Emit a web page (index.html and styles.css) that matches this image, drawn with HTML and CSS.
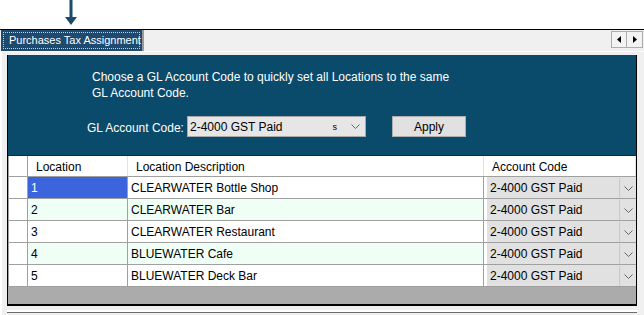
FILE: index.html
```html
<!DOCTYPE html>
<html>
<head>
<meta charset="utf-8">
<link rel="stylesheet" href="styles.css">
</head>
<body>
<div class="top">
  <svg class="arrow" width="12" height="26" viewBox="0 0 12 26">
    <rect x="4.5" y="0" width="3" height="18" fill="#1b4b6b"/>
    <polygon points="0,17 12,17 6,25" fill="#1b4b6b"/>
  </svg>
</div>
<div class="tabbar">
  <div class="tab"><span class="tab-label">Purchases Tax Assignment</span></div>
  <div class="scrollbtns">
    <div class="sbtn"><svg width="4" height="7" viewBox="0 0 4 7"><polygon points="4,0 4,7 0,3.5" fill="#000"/></svg></div>
    <div class="sbtn"><svg width="4" height="7" viewBox="0 0 4 7"><polygon points="0,0 0,7 4,3.5" fill="#000"/></svg></div>
  </div>
</div>
<div class="page">
  <div class="frame">
    <div class="panel">
      <p class="intro">Choose a GL Account Code to quickly set all Locations to the same<br>GL Account Code.</p>
      <div class="controls">
        <span class="label">GL Account Code:</span>
        <div class="combo">
          <span class="combo-text">2-4000 GST Paid</span>
          <span class="combo-clip">s</span>
          <svg class="chev" width="9" height="5" viewBox="0 0 9 5"><polyline points="0.5,0.5 4.5,4.5 8.5,0.5" fill="none" stroke="#666" stroke-width="1"/></svg>
        </div>
        <div class="btn">Apply</div>
      </div>
    </div>
    <div class="grid">
      <div class="row head">
        <div class="c rh"></div>
        <div class="c">Location</div>
        <div class="c">Location Description</div>
        <div class="c">Account Code</div>
      </div>
      <div class="row odd">
        <div class="c rh"></div>
        <div class="c sel">1</div>
        <div class="c">CLEARWATER Bottle Shop</div>
        <div class="c acc"><div class="dd"><span>2-4000 GST Paid</span><div class="ddb"><svg width="9" height="5" viewBox="0 0 9 5"><polyline points="0.5,0.5 4.5,4.5 8.5,0.5" fill="none" stroke="#666" stroke-width="1"/></svg></div></div></div>
      </div>
      <div class="row even">
        <div class="c rh"></div>
        <div class="c">2</div>
        <div class="c">CLEARWATER Bar</div>
        <div class="c acc"><div class="dd"><span>2-4000 GST Paid</span><div class="ddb"><svg width="9" height="5" viewBox="0 0 9 5"><polyline points="0.5,0.5 4.5,4.5 8.5,0.5" fill="none" stroke="#666" stroke-width="1"/></svg></div></div></div>
      </div>
      <div class="row odd">
        <div class="c rh"></div>
        <div class="c">3</div>
        <div class="c">CLEARWATER Restaurant</div>
        <div class="c acc"><div class="dd"><span>2-4000 GST Paid</span><div class="ddb"><svg width="9" height="5" viewBox="0 0 9 5"><polyline points="0.5,0.5 4.5,4.5 8.5,0.5" fill="none" stroke="#666" stroke-width="1"/></svg></div></div></div>
      </div>
      <div class="row even">
        <div class="c rh"></div>
        <div class="c">4</div>
        <div class="c">BLUEWATER Cafe</div>
        <div class="c acc"><div class="dd"><span>2-4000 GST Paid</span><div class="ddb"><svg width="9" height="5" viewBox="0 0 9 5"><polyline points="0.5,0.5 4.5,4.5 8.5,0.5" fill="none" stroke="#666" stroke-width="1"/></svg></div></div></div>
      </div>
      <div class="row odd">
        <div class="c rh"></div>
        <div class="c">5</div>
        <div class="c">BLUEWATER Deck Bar</div>
        <div class="c acc"><div class="dd"><span>2-4000 GST Paid</span><div class="ddb"><svg width="9" height="5" viewBox="0 0 9 5"><polyline points="0.5,0.5 4.5,4.5 8.5,0.5" fill="none" stroke="#666" stroke-width="1"/></svg></div></div></div>
      </div>
      <div class="empty"></div>
    </div>
  </div>
</div>
</body>
</html>
```

FILE: styles.css
```css
* { box-sizing: border-box; }
html, body { margin: 0; padding: 0; }
body {
  width: 644px;
  height: 315px;
  overflow: hidden;
  background: #ffffff;
  font-family: "Liberation Sans", Arial, sans-serif;
  font-size: 12px;
  color: #000;
}
.top {
  height: 29px;
  padding-left: 65px;
}
.arrow { display: block; }

.tabbar {
  border-top: 1px solid #000;
  height: 22px;
  background: #f0f0f0;
  display: flex;
  align-items: flex-start;
}
.tab {
  margin-left: 1px;
  width: 143px;
  height: 21px;
  background: #1d4a6e;
  border-right: 2px solid #9a9a9a;
  padding: 2px 2px 2px 2px;
}
.tab-label {
  display: block;
  height: 17px;
  border: 1px dotted #f3c48f;
  color: #fff;
  font-size: 11px;
  line-height: 15px;
  padding-left: 5px;
  white-space: nowrap;
}
.scrollbtns {
  margin-left: auto;
  margin-right: 1px;
  margin-top: 1px;
  display: flex;
}
.sbtn {
  width: 16px;
  height: 17px;
  border: 1px solid #adadad;
  background: #f3f3f3;
  display: flex;
  align-items: center;
  justify-content: center;
}
.sbtn + .sbtn { border-left: none; }

.page {
  height: 264px;
  background: #f0f0f0;
  border-top: 1px solid #fcfcfc;
  border-left: 2px solid #ffffff;
  padding-top: 3px;
  padding-left: 5px;
}
.frame {
  width: 630px;
  border-left: 1px solid #000;
  border-right: 1px solid #000;
  border-bottom: 2px solid #000;
  box-shadow: 0 4px 0 0 #f0f0f0, 0 6px 0 0 #ffffff, 0 7px 0 0 #6b6b6b;
}
.panel {
  height: 101px;
  background: #0a4a6b;
  color: #fff;
  padding: 14px 0 0 84px;
  border-bottom: 1px solid #0d2b3c;
}
.intro {
  margin: 0;
  line-height: 16px;
}
.controls {
  display: flex;
  align-items: center;
  margin-top: 15px;
  margin-left: -5px;
}
.label {
  padding-top: 3px;
  width: 100px;
}
.combo {
  width: 179px;
  height: 21px;
  background: #e6e6e6;
  border: 1px solid #a8a8a8;
  color: #000;
  display: flex;
  align-items: center;
  padding-left: 2px;
}
.combo-text { flex: 1; }
.combo-clip { font-size: 9px; margin-right: 14px; }
.chev { margin-right: 5px; }
.btn {
  margin-left: 26px;
  width: 74px;
  height: 21px;
  background: #e1e1e1;
  border: 1px solid #adadad;
  color: #000;
  display: flex;
  align-items: center;
  justify-content: center;
}

.grid {
  background: #ababab;
}
.row {
  display: grid;
  grid-template-columns: 20px 100px 356px 1fr;
  height: 22px;
  border-bottom: 1px solid #a0a0a0;
}
.row.head {
  height: 21px;
  background: #fff;
}
.row.odd { background: #ffffff; }
.row.even { background: #f0fff6; }
.c {
  padding-left: 8px;
  line-height: 22px;
  border-right: 1px solid #a0a0a0;
  white-space: nowrap;
  overflow: hidden;
}
.head .c { border-right: 1px solid #e3e3e3; padding-left: 8px; line-height: 22px; }
.c.rh { background: #fff; border-left: 1px solid #a0a0a0; padding: 0; }
.head .c.rh { border-right: 1px solid #a0a0a0; }
.c + .c + .c { padding-left: 3px; }
.head .c + .c + .c { padding-left: 8px; }
.c.sel { background: #3c64dc; color: #fff; padding-left: 3px; }
.c:nth-child(2) { padding-left: 3px; }
.head .c:nth-child(2) { padding-left: 8px; }
.c.acc { padding: 0; border-right: none; background: #fff; }
.dd {
  width: 149px;
  height: 21px;
  background: #e1e1e1;
  display: flex;
  align-items: center;
  padding-left: 3px;
  padding-top: 1px;
}
.dd span { flex: 1; }
.ddb {
  width: 17px;
  height: 20px;
  border-left: 1px solid #c8c8c8;
  display: flex;
  align-items: center;
  justify-content: center;
}
.empty { height: 17px; }
```
